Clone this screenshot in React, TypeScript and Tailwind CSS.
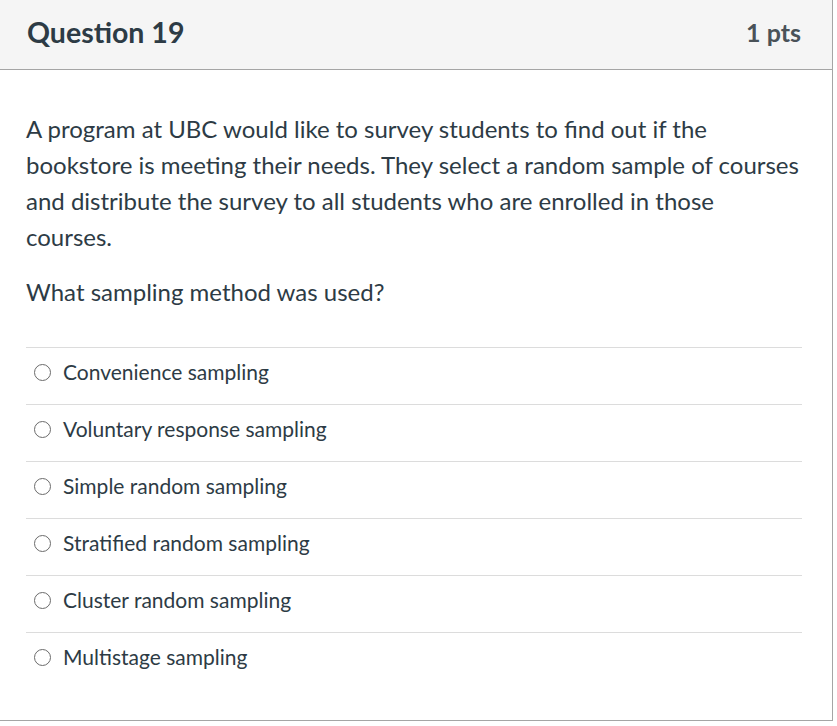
import React from 'react';

const answers = [
  'Convenience sampling',
  'Voluntary response sampling',
  'Simple random sampling',
  'Stratified random sampling',
  'Cluster random sampling',
  'Multistage sampling',
];

export default function App() {
  return (
    <div className="w-[837px] h-[726px] bg-white" style={{ fontFamily: 'Lato, "Open Sans", sans-serif' }}>
      <div className="w-[833px] h-[721px] border-r border-b border-[#a5a5a5] flex flex-col">
        {/* header */}
        <div className="h-[70px] shrink-0 bg-[#f5f5f5] border-b border-[#a5a5a5] flex items-center justify-between pl-[27px] pr-[31px] pb-[4px]">
          <h2 className="text-[28.5px] font-bold text-[#2d3b45] leading-none">Question 19</h2>
          <span className="text-[25px] font-bold text-[#4a5258] leading-none">1 pts</span>
        </div>

        <div className="pl-[26px] pr-[30px] pt-[41px] text-[#2d3b45]">
          <p className="text-[24px] leading-[36px]">
            A program at UBC would like to survey students to find out if the bookstore is meeting their needs. They select a random sample of courses and distribute the survey to all students who are enrolled in those courses.
          </p>
          <p className="text-[24px] leading-[36px] mt-[19px]">What sampling method was used?</p>

          <div className="mt-[37px]">
            {answers.map((a) => (
              <div key={a} className="h-[57px] border-t border-[#dcdcdc] flex items-center gap-[12px] pl-[8px] pb-[8px]">
                <span className="w-[17px] h-[17px] rounded-full border-[1.5px] border-[#6b6b6b] bg-white shrink-0" />
                <span className="text-[21px] text-[#2d3b45]">{a}</span>
              </div>
            ))}
          </div>
        </div>
      </div>
    </div>
  );
}
